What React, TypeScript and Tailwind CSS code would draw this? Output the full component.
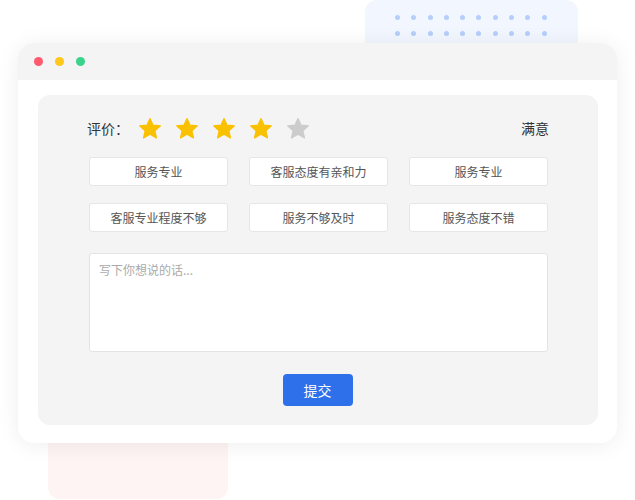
import React from 'react';

const tags = ['服务专业', '客服态度有亲和力', '服务专业', '客服专业程度不够', '服务不够及时', '服务态度不错'];

const Star = ({ on }: { on: boolean }) => (
  <svg width="24" height="23" viewBox="0 0 24 23">
    <polygon
      points="12,1.5 15.1,8.2 22.4,8.9 16.9,13.8 18.5,21 12,17.2 5.5,21 7.1,13.8 1.6,8.9 8.9,8.2"
      fill={on ? '#fac100' : '#cccccc'}
      stroke={on ? '#fac100' : '#cccccc'}
      strokeWidth="1.2"
      strokeLinejoin="round"
    />
  </svg>
);

export default function App() {
  const dots = Array.from({ length: 10 });
  return (
    <div className="relative w-[635px] h-[500px] bg-white overflow-hidden font-['Noto_Sans_CJK_SC','Noto_Sans',sans-serif]">
      {/* back decorations */}
      <div className="absolute left-[365px] top-0 w-[213px] h-[60px] rounded-t-[12px] bg-[#f2f6fe]">
        <div className="flex flex-col gap-[11px] pl-[30px] pt-[15px]">
          {[0, 1].map((r) => (
            <div key={r} className="flex gap-[11.3px]">
              {dots.map((_, i) => (
                <div key={i} className="w-[5px] h-[5px] rounded-full bg-[#b4cffb]" />
              ))}
            </div>
          ))}
        </div>
      </div>
      <div className="absolute left-[48px] top-[420px] w-[180px] h-[79px] rounded-b-[12px] bg-[#fdf4f3]" />

      {/* window */}
      <div className="relative pt-[43px] pl-[18px]">
        <div className="w-[599px] h-[400px] rounded-[16px] bg-white shadow-[0_2px_22px_rgba(0,0,0,0.07)] overflow-hidden flex flex-col">
          <div className="h-[37px] bg-[#f4f4f4] flex items-center pl-[16px] gap-[12px]">
            <div className="w-[9px] h-[9px] rounded-full bg-[#ff5a6e]" />
            <div className="w-[9px] h-[9px] rounded-full bg-[#ffc71c]" />
            <div className="w-[9px] h-[9px] rounded-full bg-[#3bd38c]" />
          </div>
          <div className="pt-[15px] pl-[20px]">
            <div className="w-[560px] h-[330px] rounded-[12px] bg-[#f4f4f4] pl-[51px] pr-[50px] pt-[21px] flex flex-col">
              <div className="flex items-center h-[24px]">
                <span className="text-[14px] text-[#333] ml-[-2px] w-[51px]">评价：</span>
                <div className="flex gap-[13px]">
                  {[1, 2, 3, 4, 5].map((n) => (
                    <Star key={n} on={n <= 4} />
                  ))}
                </div>
                <span className="ml-auto mr-[-1px] text-[14px] text-[#333]">满意</span>
              </div>
              <div className="grid grid-cols-3 gap-x-[21px] gap-y-[17px] mt-[17px]">
                {tags.map((t, i) => (
                  <div
                    key={i}
                    className="h-[29px] bg-white border border-[#e6e6e6] rounded-[3px] flex items-center justify-center text-[12px] text-[#555]"
                  >
                    {t}
                  </div>
                ))}
              </div>
              <div className="mt-[21px] h-[99px] bg-white border border-[#e3e3e3] rounded-[3px] px-[9px] pt-[7px] text-[12px] text-[#aaa]">
                写下你想说的话...
              </div>
              <div className="flex justify-center mt-[22px]">
                <button className="w-[70px] h-[32px] rounded-[4px] bg-[#2e6fea] text-white text-[14px] ml-[-2px]">
                  提交
                </button>
              </div>
            </div>
          </div>
        </div>
      </div>
    </div>
  );
}
